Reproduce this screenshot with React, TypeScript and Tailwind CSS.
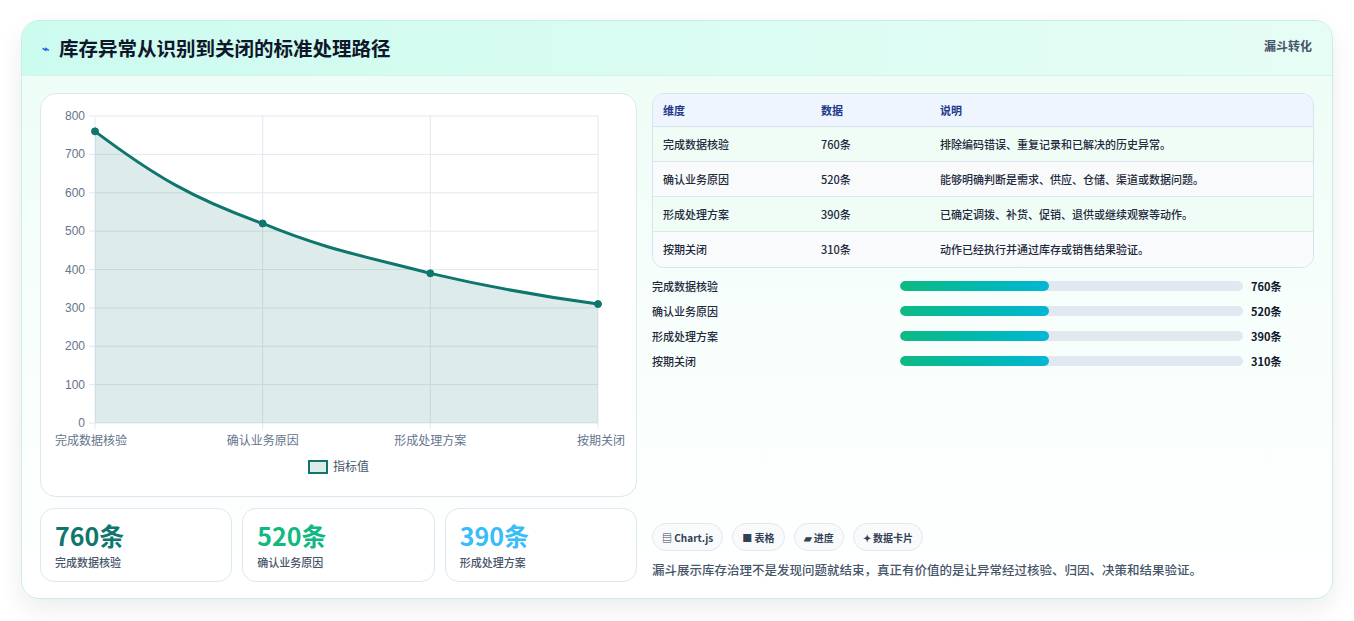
import React from "react";

const rows = [
  ["完成数据核验", "760条", "排除编码错误、重复记录和已解决的历史异常。"],
  ["确认业务原因", "520条", "能够明确判断是需求、供应、仓储、渠道或数据问题。"],
  ["形成处理方案", "390条", "已确定调拨、补货、促销、退供或继续观察等动作。"],
  ["按期关闭", "310条", "动作已经执行并通过库存或销售结果验证。"],
];

function Chart() {
  const ox = 54, oy = 22, w = 503, h = 307;
  const xs = [0, 1, 2, 3].map((i) => ox + (i * w) / 3);
  const vals = [760, 520, 390, 310];
  const ys = vals.map((v) => oy + h - (v / 800) * h);
  const line = `M${xs[0]},${ys[0]} C${xs[0] + 60},${ys[0] + 45} ${xs[1] - 70},${ys[1] - 25} ${xs[1]},${ys[1]} C${xs[1] + 60},${ys[1] + 25} ${xs[2] - 70},${ys[2] - 18} ${xs[2]},${ys[2]} C${xs[2] + 60},${ys[2] + 14} ${xs[3] - 60},${ys[3] - 8} ${xs[3]},${ys[3]}`;
  const labels = ["完成数据核验", "确认业务原因", "形成处理方案", "按期关闭"];
  return (
    <svg width="597" height="403" style={{ fontFamily: "'Liberation Sans','Noto Sans CJK SC',sans-serif" }}>
      {[0, 1, 2, 3, 4, 5, 6, 7, 8].map((i) => {
        const y = oy + h - (i * h) / 8;
        return (
          <g key={i}>
            <line x1={ox - 6} x2={ox + w} y1={y} y2={y} stroke="#e2e8f0" />
            <text x={ox - 10} y={y + 4} textAnchor="end" fontSize="12" fill="#64748b">{i * 100}</text>
          </g>
        );
      })}
      {xs.map((x, i) => (
        <g key={i}>
          <line x1={x} x2={x} y1={oy} y2={oy + h + 6} stroke="#e2e8f0" />
          <text x={x} y={oy + h + 22} textAnchor={i === 0 ? "start" : i === 3 ? "end" : "middle"} dx={i === 0 ? -40 : i === 3 ? 27 : 0} fontSize="12" fill="#64748b">{labels[i]}</text>
        </g>
      ))}
      <path d={`${line} L${xs[3]},${oy + h} L${xs[0]},${oy + h} Z`} fill="rgba(15,118,110,0.14)" />
      <path d={line} fill="none" stroke="#0f766e" strokeWidth="3" />
      {xs.map((x, i) => (
        <circle key={i} cx={x} cy={ys[i]} r="3.5" fill="#0f766e" stroke="#0f766e" strokeWidth="1" />
      ))}
      <rect x="268" y="367" width="18" height="12" fill="rgba(15,118,110,0.14)" stroke="#0f766e" strokeWidth="2" />
      <text x="292" y="377" fontSize="12" fill="#475569">指标值</text>
    </svg>
  );
}

export default function App() {
  return (
    <div className="w-[1354px] h-[621px] bg-white" style={{ fontFamily: "'Noto Sans CJK SC','Liberation Sans',sans-serif" }}>
      <div className="pt-[20px] pl-[21px]">
        <div className="w-[1312px] h-[579px] rounded-[18px] border border-[#c6eeea] bg-gradient-to-b from-[#ecfdf5] via-[#f7fefc] to-white shadow-[0_10px_24px_rgba(15,23,42,0.08)] overflow-hidden">
          <div className="h-[55px] bg-gradient-to-r from-[#ccfbef] to-[#e6fdf5] border-b border-[#d5f3ec] flex items-center justify-between px-[20px]">
            <div className="flex items-center gap-[10px]">
              <span className="text-[#2563eb] text-[12px] font-bold">⌁</span>
              <span className="text-[19.5px] font-bold text-[#0f172a]">库存异常从识别到关闭的标准处理路径</span>
            </div>
            <span className="text-[12px] font-bold text-[#475569] self-start mt-[16px]">漏斗转化</span>
          </div>
          <div className="flex gap-[15px] px-[18px] pt-[17px]">
            <div className="w-[597px] flex flex-col gap-[11px]">
              <div className="h-[404px] bg-white rounded-[16px] border border-[#dde7ee]">
                <Chart />
              </div>
              <div className="flex gap-[10px]">
                {[["760条", "完成数据核验", "text-[#0f766e]"], ["520条", "确认业务原因", "text-[#10b981]"], ["390条", "形成处理方案", "text-[#38bdf8]"]].map(([v, l, c]) => (
                  <div key={l} className="w-[193px] h-[74px] rounded-[14px] border border-[#dde7ee] bg-white px-[14px] pt-[7px]">
                    <div className={`text-[25px] font-bold leading-[38px] ${c}`}>{v}</div>
                    <div className="text-[11px] text-[#475569] font-medium">{l}</div>
                  </div>
                ))}
              </div>
            </div>
            <div className="w-[662px] flex flex-col">
              <div className="rounded-[12px] border border-[#d6e2ec] overflow-hidden text-[11px] font-medium">
                <div className="flex h-[33px] items-center bg-[#eef5fe] text-[#1e3a8a] font-bold border-b border-[#d6e2ec]">
                  <div className="w-[168px] pl-[10px]">维度</div>
                  <div className="w-[119px]">数据</div>
                  <div>说明</div>
                </div>
                {rows.map((r, i) => (
                  <div key={i} className={`flex h-[35px] items-center text-[#1e293b] ${i % 2 === 0 ? "bg-[#f0fdf6]" : "bg-[#f8fafc]"} ${i < 3 ? "border-b border-[#dfe7ee]" : ""}`}>
                    <div className="w-[168px] pl-[10px]">{r[0]}</div>
                    <div className="w-[119px]">{r[1]}</div>
                    <div>{r[2]}</div>
                  </div>
                ))}
              </div>
              <div className="flex flex-col gap-[11px] mt-[11px]">
                {rows.map((r) => (
                  <div key={r[0]} className="flex items-center h-[14px] text-[11px] font-medium">
                    <div className="w-[248px] text-[#1e293b]">{r[0]}</div>
                    <div className="w-[343px] h-[10px] rounded-full bg-[#e2e8f0] overflow-hidden">
                      <div className="w-[149px] h-full rounded-full bg-gradient-to-r from-[#10b981] to-[#06b6d4]" />
                    </div>
                    <div className="ml-[8px] font-bold text-[#0f172a]">{r[1]}</div>
                  </div>
                ))}
              </div>
              <div className="flex gap-[9px]" style={{ marginTop: 155 }}>
                {["▤ Chart.js", "■ 表格", "▰ 进度", "✦ 数据卡片"].map((t) => (
                  <span key={t} className="h-[28px] px-[9px] rounded-full border border-[#e2e8f0] bg-[#f8fafc] text-[10px] font-bold text-[#334155] flex items-center">{t}</span>
                ))}
              </div>
              <div className="mt-[10px] text-[12.5px] font-medium text-[#475569]">漏斗展示库存治理不是发现问题就结束，真正有价值的是让异常经过核验、归因、决策和结果验证。</div>
            </div>
          </div>
        </div>
      </div>
    </div>
  );
}
